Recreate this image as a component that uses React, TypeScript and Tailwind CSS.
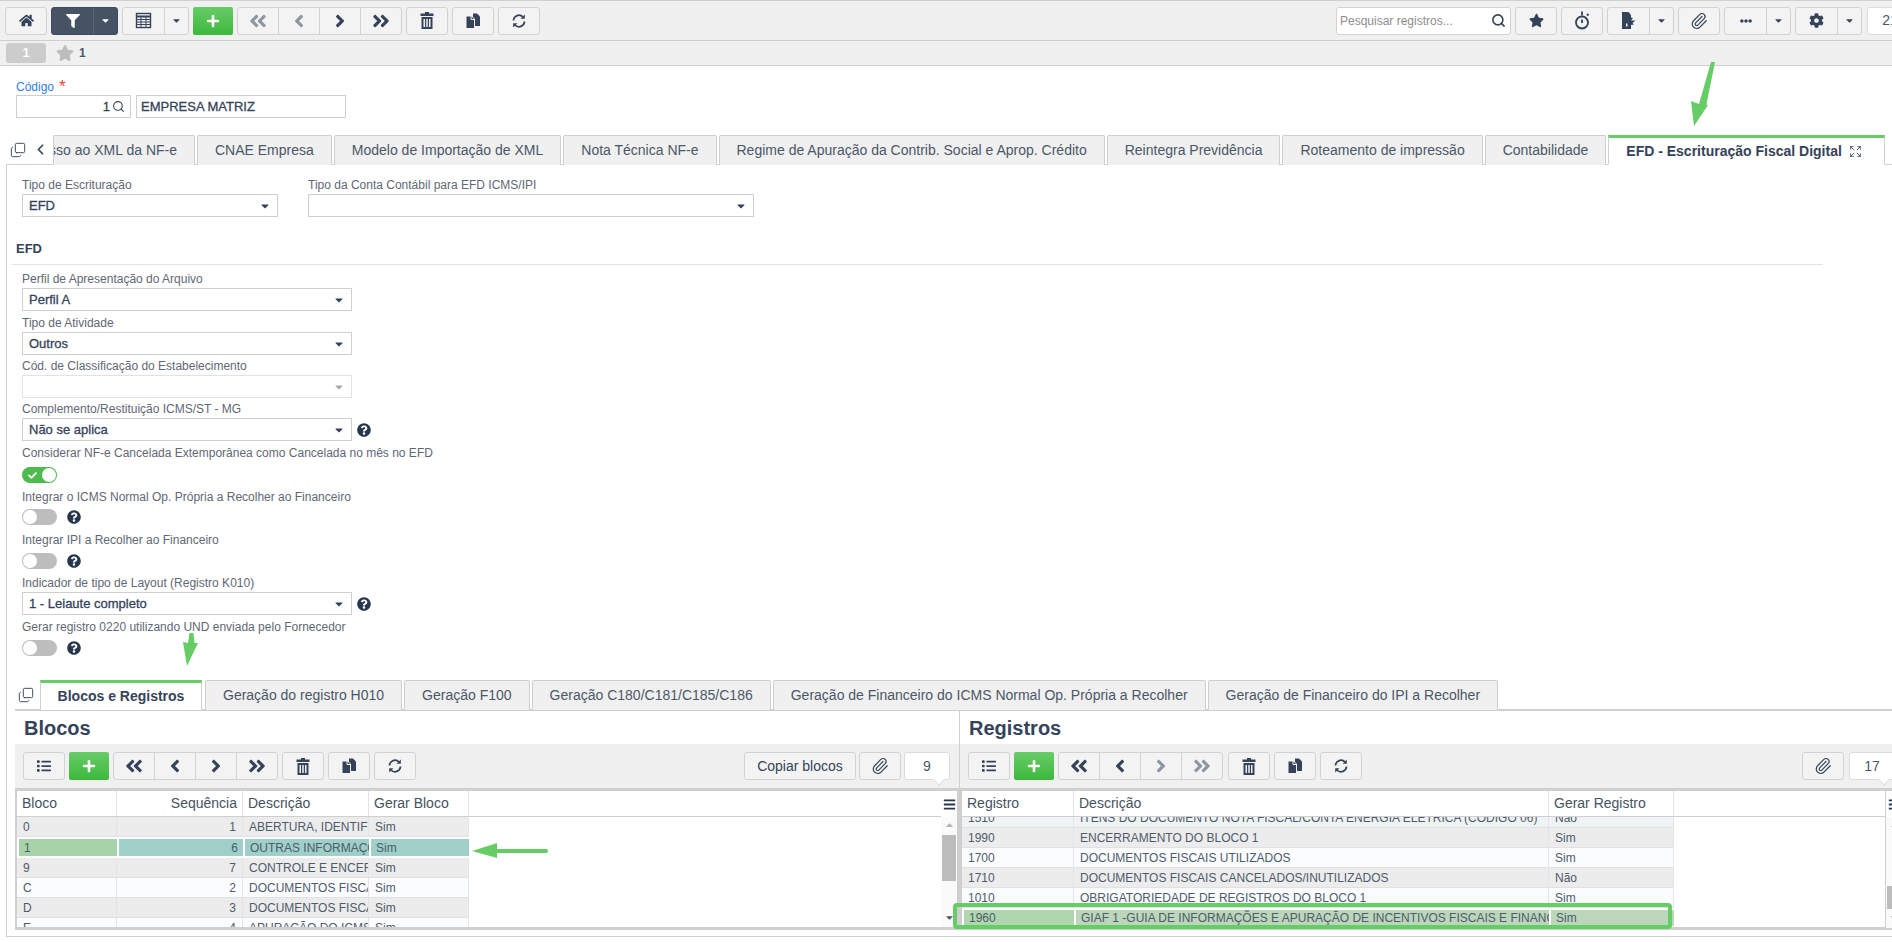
import type { ReactNode } from "react"
import { ChevronLeft, Copy, Expand, Paperclip, Search } from "lucide-react"
import {
  FaAngleDoubleLeft,
  FaAngleDoubleRight,
  FaAngleLeft,
  FaAngleRight,
  FaBars,
  FaCaretDown,
  FaCheck,
  FaCog,
  FaEllipsisH,
  FaFilter,
  FaHome,
  FaList,
  FaPlus,
  FaQuestionCircle,
  FaStar,
} from "react-icons/fa"

const btn = "flex h-[28px] items-center justify-center border border-[#d2d2d2] bg-[#f3f3f3] text-[#34435a]"
const fieldBox = "flex h-[23px] items-center justify-between border border-[#cfcfcf] bg-white px-[6px] text-[13px] [-webkit-text-stroke:0.3px]"
const label = "flex h-[19px] items-center text-[12px] text-[#5f6874]"

function TrashIcon() {
  return (
    <svg width="14" height="17" viewBox="0 0 14 17" fill="currentColor">
      <path d="M5 0h4v1.5h4.5v2.5H.5V1.500H5z" />
      <path fillRule="evenodd" d="M1.500 5h11v12h-11zM3.500 7v8h1.500V7zM6.250 7v8h1.500V7zM9 7v8h1.500V7z" />
    </svg>
  )
}

function CopyDocs() {
  return (
    <svg width="16" height="16" viewBox="0 0 16 16" fill="currentColor">
      <path d="M8 0.500h4l3 3v9.500H8z" />
      <path d="M1 3h5.500l3 3v9.500H1z" stroke="#f3f3f3" strokeWidth="1" />
      <path d="M6 3v3.500h3.500" fill="none" stroke="#f3f3f3" strokeWidth="1" />
    </svg>
  )
}

function RefreshIcon() {
  return (
    <svg width="16" height="16" viewBox="0 0 16 16" fill="none" stroke="currentColor" strokeWidth="1.7">
      <path d="M2.500 7.500A5.500 5.500 0 0 1 12 4" />
      <path d="M13.500 8.500A5.500 5.500 0 0 1 4 12" />
      <path d="M13.800 1.500v4.200H9.600z" fill="currentColor" stroke="none" />
      <path d="M2.200 14.500v-4.200H6.400z" fill="currentColor" stroke="none" />
    </svg>
  )
}

function TableIcon() {
  return (
    <svg width="17" height="17" viewBox="0 0 17 17" fill="none" stroke="currentColor" strokeWidth="1">
      <rect x="1.500" y="1.500" width="14" height="14" strokeWidth="1.400" />
      <path d="M1.500 4.500h14" strokeWidth="2" />
      <path d="M1.500 7.500h14M1.500 10h14M1.500 12.500h14M6 4.500v11M11 4.500v11" />
    </svg>
  )
}

function Stopwatch() {
  return (
    <svg width="17" height="19" viewBox="0 0 17 19" fill="none" stroke="currentColor" strokeWidth="1.800">
      <circle cx="8" cy="11.500" r="6" />
      <path d="M8 0.500v4M8 8.500v3.500M13 4.500l1.500-1.500" />
    </svg>
  )
}

function ExportDoc() {
  return (
    <svg width="15" height="17" viewBox="0 0 15 17" fill="currentColor">
      <path fillRule="evenodd" d="M1 0h6.500L10 3v2.500l2 .5-2 2.500h4.500l-3 2.500 1.500 1.500-3 .5V17H1zM5 11.500v3h1.500v-3z" />
    </svg>
  )
}

function IconBtn({ children, w = "w-[42px]", className = "" }: { children: ReactNode; w?: string; className?: string }) {
  return <div className={`${btn} ${w} rounded-[3px] ${className}`}>{children}</div>
}

function Clip() {
  return <Paperclip size={18} strokeWidth={1.6} />
}

function AddBtn() {
  return (
    <div className="flex h-[28px] w-[40px] items-center justify-center rounded-[2px] bg-linear-to-b from-[#66cc66] to-[#3bb83b] text-white">
      <FaPlus size={14} />
    </div>
  )
}

function SplitBtn({ children, dark }: { children: ReactNode; dark?: boolean }) {
  const tone = dark ? "border-[#3f4c5d] bg-[#465365] text-white" : "border-[#d2d2d2] bg-[#f3f3f3] text-[#34435a]"
  return (
    <div className={`flex h-[28px] w-[67px] rounded-[3px] border ${tone}`}>
      <div className="flex w-[41px] items-center justify-center">{children}</div>
      <div className={`flex flex-1 items-center justify-center border-l ${dark ? "border-[#5a6676]" : "border-[#d2d2d2]"}`}>
        <FaCaretDown size={11} />
      </div>
    </div>
  )
}

function Nav({ first, last }: { first: boolean; last: boolean }) {
  const on = "text-[#34435a]"
  const off = "text-[#8e96a1]"
  return (
    <div className="flex h-[28px] w-[165px] rounded-[3px] border border-[#d2d2d2] bg-[#f3f3f3]">
      <div className={`flex flex-1 items-center justify-center ${first ? on : off}`}><FaAngleDoubleLeft size={20} /></div>
      <div className={`flex flex-1 items-center justify-center border-l border-[#d2d2d2] ${first ? on : off}`}><FaAngleLeft size={20} /></div>
      <div className={`flex flex-1 items-center justify-center border-l border-[#d2d2d2] ${last ? on : off}`}><FaAngleRight size={20} /></div>
      <div className={`flex flex-1 items-center justify-center border-l border-[#d2d2d2] ${last ? on : off}`}><FaAngleDoubleRight size={20} /></div>
    </div>
  )
}

function CountBubble({ value, className = "" }: { value: string; className?: string }) {
  return (
    <div className={`relative flex h-[28px] w-[46px] shrink-0 items-center justify-center rounded-[3px] border border-[#dcdcdc] bg-white text-[14px] text-[#4b5768] ${className}`}>
      {value}
      <span className="absolute right-[6px] top-[23px] h-[8px] w-[8px] rotate-45 border-b border-r border-[#dcdcdc] bg-white" />
    </div>
  )
}

function TopBar() {
  return (
    <div className="flex h-[41px] items-center border-y border-[#cfcfcf] bg-[#f0f0f0] pl-[5px]">
      <div className="flex items-center gap-[4px]">
        <IconBtn><FaHome size={15} /></IconBtn>
        <SplitBtn dark><FaFilter size={14} /></SplitBtn>
        <SplitBtn><TableIcon /></SplitBtn>
        <AddBtn />
        <Nav first={false} last />
        <IconBtn><TrashIcon /></IconBtn>
        <IconBtn><CopyDocs /></IconBtn>
        <IconBtn><RefreshIcon /></IconBtn>
      </div>
      <div className="ml-auto mr-[-21px] flex items-center gap-[4px]">
        <div className="flex h-[28px] w-[175px] items-center justify-between rounded-[3px] border border-[#d2d2d2] bg-white pl-[3px] pr-[4px] text-[12px] text-[#8d8d8d]">
          Pesquisar registros...
          <Search size={15} strokeWidth={2.5} className="text-[#34435a]" />
        </div>
        <IconBtn><FaStar size={15} /></IconBtn>
        <IconBtn><Stopwatch /></IconBtn>
        <SplitBtn><ExportDoc /></SplitBtn>
        <IconBtn><Clip /></IconBtn>
        <SplitBtn><FaEllipsisH size={12} /></SplitBtn>
        <SplitBtn><FaCog size={15} /></SplitBtn>
        <div className="ml-[1px] flex h-[28px] w-[46px] items-center justify-center rounded-[3px] border border-[#dcdcdc] bg-white text-[14px] text-[#4b5768]">
          21
        </div>
      </div>
    </div>
  )
}

function Select({ value, w, disabled, help }: { value?: string; w: string; disabled?: boolean; help?: boolean }) {
  return (
    <div className="flex items-center">
      <div className={`${fieldBox} ${w} ${disabled ? "border-[#e2e2e2] bg-[#f7f7f7]" : ""}`}>
        {value}
        <FaCaretDown size={12} className={`ml-auto ${disabled ? "text-[#a9a9a9]" : "text-[#34435a]"}`} />
      </div>
      {help && <FaQuestionCircle size={14} className="ml-[5px] text-[#26364d]" />}
    </div>
  )
}

function Toggle({ on, help, className = "" }: { on?: boolean; help?: boolean; className?: string }) {
  return (
    <div className={`flex items-center ${className}`}>
      {on ? (
        <div className="flex h-[16px] w-[35px] items-center justify-between rounded-full bg-[#4dbb4d] pl-[6px] pr-[1px] text-white">
          <FaCheck size={9} />
          <span className="h-[14px] w-[14px] rounded-full bg-white" />
        </div>
      ) : (
        <div className="flex h-[16px] w-[35px] items-center rounded-full bg-[#bdbdbd] pl-[1px]">
          <span className="h-[14px] w-[14px] rounded-full bg-white" />
        </div>
      )}
      {help && <FaQuestionCircle size={14} className="ml-[10px] text-[#26364d]" />}
    </div>
  )
}

const mainTabs = [
  "CNAE Empresa",
  "Modelo de Importação de XML",
  "Nota Técnica NF-e",
  "Regime de Apuração da Contrib. Social e Aprop. Crédito",
  "Reintegra Previdência",
  "Roteamento de impressão",
  "Contabilidade",
]

const subTabs = [
  "Geração do registro H010",
  "Geração F100",
  "Geração C180/C181/C185/C186",
  "Geração de Financeiro do ICMS Normal Op. Própria a Recolher",
  "Geração de Financeiro do IPI a Recolher",
]

const tabClass = "flex h-[30px] items-center whitespace-nowrap border-x border-t border-[#cfcfcf] bg-[#f0f0f0] px-[17px] text-[14px] text-[#4b5768] rounded-t-[2px]"

function MainTabs() {
  return (
    <div className="flex h-[30px] border-b border-[#cfcfcf] pl-[4px]">
      <div className="relative z-10 flex w-[43px] shrink-0 items-center bg-white text-[#34435a]">
        <Copy size={16} strokeWidth={1.4} className="-scale-y-100" />
        <ChevronLeft size={17} strokeWidth={2.4} className="ml-[6px]" />
      </div>
      <div className={`${tabClass} w-[142px] shrink-0 justify-end overflow-hidden`}>Acesso ao XML da NF-e</div>
      <div className="ml-[2px] flex gap-[2px]">
        {mainTabs.map((t) => (
          <div key={t} className={tabClass}>{t}</div>
        ))}
        <div className="flex h-[30px] items-center gap-[7px] whitespace-nowrap border-x border-[#cfcfcf] border-t-[3px] border-t-[#66cc66] bg-white pl-[17px] pr-[22px] text-[14px] font-bold text-[#34435a] [border-bottom:1px_solid_white]">
          EFD - Escrituração Fiscal Digital
          <Expand size={13} strokeWidth={1.5} />
        </div>
      </div>
    </div>
  )
}

function EfdFields() {
  return (
    <div className="flex flex-col pl-[15px]">
      <div className="mt-[4px]"><div className={label}>Perfil de Apresentação do Arquivo</div><Select value="Perfil A" w="w-[330px]" /></div>
      <div className="mt-[2px]"><div className={label}>Tipo de Atividade</div><Select value="Outros" w="w-[330px]" /></div>
      <div className="mt-[1px]"><div className={label}>Cód. de Classificação do Estabelecimento</div><Select w="w-[330px]" disabled /></div>
      <div className="mt-[1px]"><div className={label}>Complemento/Restituição ICMS/ST - MG</div><Select value="Não se aplica" w="w-[330px]" help /></div>
      <div className="mt-[2px]"><div className={label}>Considerar NF-e Cancelada Extemporânea como Cancelada no mês no EFD</div><Toggle on className="mt-[5px]" /></div>
      <div className="mt-[4px]"><div className={label}>Integrar o ICMS Normal Op. Própria a Recolher ao Financeiro</div><Toggle help className="mt-[3px]" /></div>
      <div className="mt-[5px]"><div className={label}>Integrar IPI a Recolher ao Financeiro</div><Toggle help className="mt-[4px]" /></div>
      <div className="mt-[4px]"><div className={label}>Indicador de tipo de Layout (Registro K010)</div><Select value="1 - Leiaute completo" w="w-[330px]" help /></div>
      <div className="mt-[2px]"><div className={label}>Gerar registro 0220 utilizando UND enviada pelo Fornecedor</div><Toggle help className="mt-[4px]" /></div>
    </div>
  )
}

function SubTabs() {
  return (
    <div className="mt-[24px] ml-[8px] flex h-[31px] border-b-[2px] border-[#cfcfcf]">
      <div className="flex w-[25px] shrink-0 items-center pl-[3px] text-[#34435a]"><Copy size={16} strokeWidth={1.4} className="-scale-y-100" /></div>
      <div className="flex h-[30px] w-[162px] items-center justify-center whitespace-nowrap border-x border-[#cfcfcf] border-t-[3px] border-t-[#66cc66] bg-white text-[14px] font-bold text-[#34435a]">
        Blocos e Registros
      </div>
      <div className="ml-[3px] flex gap-[2px]">
        {subTabs.map((t) => (
          <div key={t} className={`${tabClass} h-[29px]`}>{t}</div>
        ))}
      </div>
    </div>
  )
}

type Cell = { text: string; w: string; right?: boolean }
type RowTone = "gray" | "light" | "pale"

const tone: Record<RowTone, string> = {
  gray: "bg-[#ececec]",
  light: "bg-[#fafcfe]",
  pale: "bg-[#eff3f4]",
}

function GridRow({ cells, kind, greenEdge, className = "" }: { cells: Cell[]; kind: RowTone; greenEdge?: boolean; className?: string }) {
  return (
    <div className={`flex h-[20px] ${className}`}>
      {cells.map((c, i) => (
        <div
          key={i}
          className={`flex items-center overflow-hidden whitespace-nowrap border-b border-r border-b-[#dfe2e5] border-r-[#e2e5e8] px-[6px] text-[12px] text-[#4f5b6b] ${c.w} ${tone[kind]} ${c.right ? "justify-end" : ""} ${greenEdge && i === cells.length - 1 ? "border-r-[#5cb85c]" : ""}`}
        >
          {c.text}
        </div>
      ))}
    </div>
  )
}

function SelectedRow({ cells, first, rest, h }: { cells: Cell[]; first: string; rest: string; h: string }) {
  return (
    <div className={`flex ${h} border-y-2 border-white`}>
      {cells.map((c, i) => (
        <div
          key={i}
          className={`flex items-center overflow-hidden whitespace-nowrap border-l-2 border-white px-[5px] text-[12px] text-[#4f5b6b] ${c.w} ${i === 0 ? first : rest} ${c.right ? "justify-end" : ""}`}
        >
          {c.text}
        </div>
      ))}
    </div>
  )
}

function GridHeader({ cols, w }: { cols: Cell[]; w?: string }) {
  return (
    <div className={`flex h-[26px] border-b border-[#cfcfcf] ${w ?? ""}`}>
      {cols.map((c) => (
        <div key={c.text} className={`flex items-center border-r border-[#e2e5e8] px-[5px] text-[14px] text-[#46525f] ${c.w} ${c.right ? "justify-end" : ""}`}>
          {c.text}
        </div>
      ))}
    </div>
  )
}

const blocoW = ["w-[100px]", "w-[126px]", "w-[126px]", "w-[100px]"]

function blocoCells(a: string, b: string, c: string, d: string): Cell[] {
  return [
    { text: a, w: blocoW[0] },
    { text: b, w: blocoW[1], right: true },
    { text: c, w: blocoW[2] },
    { text: d, w: blocoW[3] },
  ]
}

const regW = ["w-[112px]", "w-[475px]", "w-[125px]"]

function regCells(a: string, b: string, c: string): Cell[] {
  return [
    { text: a, w: regW[0] },
    { text: b, w: regW[1] },
    { text: c, w: regW[2] },
  ]
}

function Toolbar({ children, right }: { children: ReactNode; right: ReactNode }) {
  return (
    <div className="flex h-[44px] items-center bg-[#f0f0f0] pl-[8px]">
      <div className="flex items-center gap-[4px]">{children}</div>
      <div className="ml-auto flex items-center gap-[3px]">{right}</div>
    </div>
  )
}

function BlocosPanel() {
  return (
    <div className="w-[945px] shrink-0">
      <div className="flex h-[33px] items-center border-r border-[#cfcfcf] pl-[9px] text-[20px] font-bold text-[#34435a]">Blocos</div>
      <div className="border-r border-[#cfcfcf]">
        <Toolbar
          right={
            <div className="mr-[9px] flex items-center gap-[3px]">
              <IconBtn w="w-[112px]" className="text-[14px]">Copiar blocos</IconBtn>
              <IconBtn><Clip /></IconBtn>
              <CountBubble value="9" />
            </div>
          }
        >
          <IconBtn><FaList size={14} /></IconBtn>
          <AddBtn />
          <Nav first last />
          <IconBtn><TrashIcon /></IconBtn>
          <IconBtn><CopyDocs /></IconBtn>
          <IconBtn><RefreshIcon /></IconBtn>
        </Toolbar>
      </div>
      <div className="flex h-[142px] border-y-[3px] border-l-2 border-r-[3px] border-[#cfcfcf]">
        <div className="w-[924px] shrink-0">
          <GridHeader
            cols={[
              { text: "Bloco", w: blocoW[0] },
              { text: "Sequência", w: blocoW[1], right: true },
              { text: "Descrição", w: blocoW[2] },
              { text: "Gerar Bloco", w: blocoW[3] },
            ]}
          />
          <div className="h-[110px] overflow-hidden">
            <GridRow kind="gray" greenEdge cells={blocoCells("0", "1", "ABERTURA, IDENTIFICAÇÃO E CONTROLE", "Sim")} />
            <SelectedRow h="h-[21px]" first="bg-[#a8d3a8]" rest="bg-[#9ecfc8]" cells={blocoCells("1", "6", "OUTRAS INFORMAÇÕES", "Sim")} />
            <GridRow kind="gray" greenEdge cells={blocoCells("9", "7", "CONTROLE E ENCERRAMENTO", "Sim")} />
            <GridRow kind="light" greenEdge cells={blocoCells("C", "2", "DOCUMENTOS FISCAIS I", "Sim")} />
            <GridRow kind="gray" greenEdge cells={blocoCells("D", "3", "DOCUMENTOS FISCAIS II", "Sim")} />
            <GridRow kind="light" greenEdge cells={blocoCells("E", "4", "APURAÇÃO DO ICMS E IPI", "Sim")} />
          </div>
        </div>
        <ScrollCol thumb="mt-[4px] h-[46px]" gap="mt-[31px]" />
      </div>
    </div>
  )
}

function ScrollCol({ thumb, gap }: { thumb: string; gap: string }) {
  return (
    <div className="flex w-[16px] shrink-0 flex-col overflow-hidden">
      <div className="flex h-[26px] shrink-0 items-center justify-center text-[#26364d]"><FaBars size={13} /></div>
      <div className="flex h-[111px] flex-col items-center bg-[#fafafa]">
        <FaCaretDown size={11} className="mt-[3px] rotate-180 text-[#b5b5b5]" />
        <div className={`${thumb} w-[14px] shrink-0 bg-[#bcbcbc]`} />
        <FaCaretDown size={11} className={`${gap} text-[#4b5768]`} />
      </div>
    </div>
  )
}

function RegistrosPanel() {
  return (
    <div className="min-w-0 flex-1">
      <div className="flex h-[33px] items-center pl-[9px] text-[20px] font-bold text-[#34435a]">Registros</div>
      <Toolbar
        right={
          <div className="mr-[-3px] flex items-center gap-[5px]">
            <IconBtn><Clip /></IconBtn>
            <CountBubble value="17" />
          </div>
        }
      >
        <IconBtn><FaList size={14} /></IconBtn>
        <AddBtn />
        <Nav first last={false} />
        <IconBtn className="ml-[1px]"><TrashIcon /></IconBtn>
        <IconBtn><CopyDocs /></IconBtn>
        <IconBtn><RefreshIcon /></IconBtn>
      </Toolbar>
      <div className="flex h-[142px] border-y-[3px] border-l-2 border-[#cfcfcf]">
        <div className="w-[923px] shrink-0">
          <GridHeader
            cols={[
              { text: "Registro", w: regW[0] },
              { text: "Descrição", w: regW[1] },
              { text: "Gerar Registro", w: regW[2] },
            ]}
          />
          <div className="h-[110px] overflow-hidden">
            <GridRow kind="pale" className="mt-[-9px]" cells={regCells("1510", "ITENS DO DOCUMENTO NOTA FISCAL/CONTA ENERGIA ELÉTRICA (CÓDIGO 06)", "Não")} />
            <GridRow kind="gray" cells={regCells("1990", "ENCERRAMENTO DO BLOCO 1", "Sim")} />
            <GridRow kind="light" cells={regCells("1700", "DOCUMENTOS FISCAIS UTILIZADOS", "Sim")} />
            <GridRow kind="gray" cells={regCells("1710", "DOCUMENTOS FISCAIS CANCELADOS/INUTILIZADOS", "Não")} />
            <GridRow kind="light" cells={regCells("1010", "OBRIGATORIEDADE DE REGISTROS DO BLOCO 1", "Sim")} />
            <SelectedRow h="h-[20px]" first="bg-[#afd6ae]" rest="bg-[#bcd6bc]" cells={regCells("1960", "GIAF 1 -GUIA DE INFORMAÇÕES E APURAÇÃO DE INCENTIVOS FISCAIS E FINANCEIROS", "Sim")} />
          </div>
        </div>
        <div className="min-w-0 flex-1 border-l border-[#cfcfcf]">
          <ScrollCol thumb="mt-[55px] h-[23px]" gap="mt-[3px]" />
        </div>
      </div>
    </div>
  )
}

function Annotations() {
  return (
    <svg className="pointer-events-none absolute left-0 top-0 z-20" width="1892" height="942" fill="#66cc66">
      <path d="M1711 62 L1715 62 L1706.500 104 L1707 105 L1708 105 L1694 126 L1691 101 L1699 104 Z" />
      <path d="M189.500 633 L193.500 633 L194.500 643 L198 643 L187 666 L183 642 L188 643 Z" />
      <path d="M472 851 L497 843 L497 849 L547 849 Q549 851 547 853 L497 853 L497 858 Z" />
      <rect x="955" y="905" width="715" height="22" rx="2" fill="none" stroke="#66cc66" strokeWidth="4" />
    </svg>
  )
}

export default function App() {
  return (
    <div className="relative h-[942px] w-[1892px] overflow-hidden bg-white font-['Liberation_Sans',Arial,sans-serif] text-[#34435a]">
      <TopBar />
      <div className="flex h-[25px] items-center border-b border-[#cfcfcf] bg-[#f0f0f0] pl-[6px]">
        <div className="flex h-[20px] w-[40px] items-center justify-center rounded-[3px] bg-[#cccccc] text-[13px] font-bold text-white">1</div>
        <FaStar size={18} className="ml-[10px] text-[#bdbdbd]" />
        <span className="ml-[5px] text-[12px] font-bold text-[#4b5768]">1</span>
      </div>

      <div className="h-[69px] pl-[16px] pt-[12px]">
        <div className="flex h-[17px] items-center text-[12px] text-[#2f7fe6]">
          Código <span className="ml-[5px] text-[17px] leading-none text-[#e0452f]">*</span>
        </div>
        <div className="flex gap-[5px]">
          <div className="flex h-[23px] w-[115px] items-center justify-end border border-[#cfcfcf] pr-[5px] text-[13px] [-webkit-text-stroke:0.3px]">
            1
            <Search size={13} strokeWidth={2} className="ml-[2px] text-[#34435a]" />
          </div>
          <div className="flex h-[23px] w-[210px] items-center border border-[#cfcfcf] px-[4px] text-[13px] [-webkit-text-stroke:0.3px]">EMPRESA MATRIZ</div>
        </div>
      </div>

      <div className="ml-[6px]">
        <MainTabs />
        <div className="h-[772px] border-b border-l border-[#cfcfcf]">
          <div className="flex gap-[30px] pl-[15px] pt-[10px]">
            <div>
              <div className={label}>Tipo de Escrituração</div>
              <Select value="EFD" w="w-[256px]" />
            </div>
            <div>
              <div className={label}>Tipo da Conta Contábil para EFD ICMS/IPI</div>
              <Select w="w-[446px]" />
            </div>
          </div>
          <div className="ml-[5px] mt-[23px] flex h-[25px] w-[1811px] items-center border-b border-[#e2e2e2] pb-[6px] pl-[4px] text-[13px] font-bold text-[#34435a]">EFD</div>
          <EfdFields />
          <SubTabs />
          <div className="ml-[8px] flex">
            <BlocosPanel />
            <RegistrosPanel />
          </div>
        </div>
      </div>
      <Annotations />
    </div>
  )
}
